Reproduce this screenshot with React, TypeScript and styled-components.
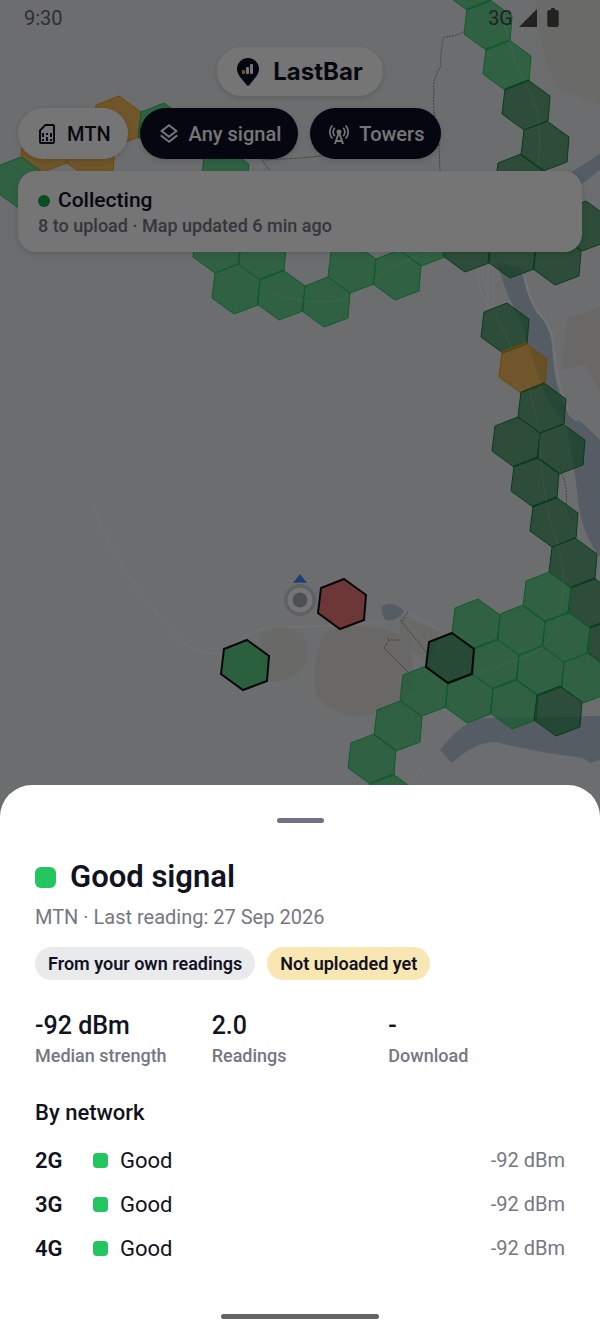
import React from "react";
import styled, { createGlobalStyle } from "styled-components";
import { MdCellTower, MdOutlineLayers, MdOutlineSimCard } from "react-icons/md";

const color = {
  ink: "#111322",
  navy: "#0a0f24",
  muted: "#757783",
  green: "#22c55e",
  darkGreen: "#15803d",
  amber: "#f59e0b",
  red: "#ef4444",
  land: "#ebeef2",
  water: "#bcc9da",
  sand: "#e4e2de",
};

const GlobalStyle = createGlobalStyle`
  *, *::before, *::after { box-sizing: border-box; }
  body {
    margin: 0;
    background: #ffffff;
    color: ${color.ink};
    font-family: Roboto, "Noto Sans", sans-serif;
  }
  h1, h2, p, dl, dd, ul { margin: 0; padding: 0; }
`;

const Screen = styled.div`
  position: relative;
  display: flex;
  flex-direction: column;
  min-height: 100vh;
  overflow: hidden;
  background: ${color.land};
`;

const MapCanvas = styled.svg`
  position: absolute;
  inset: 0;
  width: 100%;
  height: 100%;
`;

const Overlay = styled.header`
  position: relative;
  display: flex;
  flex-direction: column;
  padding: 0 18px;
`;

const StatusBar = styled.div`
  display: flex;
  align-items: center;
  justify-content: space-between;
  height: 35px;
  padding: 0 23px 0 6px;
  font-size: 20px;
  color: #66686c;
`;

const StatusIcons = styled.div`
  display: flex;
  align-items: center;
  gap: 6px;
  color: #4a4a4a;
`;

const SignalIcon = styled.svg`
  width: 18px;
  height: 18px;
  fill: currentColor;
`;

const BatteryIcon = styled.svg`
  width: 12px;
  height: 19px;
  margin-left: 4px;
  fill: currentColor;
`;

const Brand = styled.div`
  display: flex;
  align-items: center;
  align-self: center;
  gap: 14px;
  height: 49px;
  margin-top: 12px;
  padding: 0 20px;
  border-radius: 25px;
  background: #ffffff;
  box-shadow: 0 2px 6px rgba(0, 0, 0, 0.15);
  font: 700 24px/32px Inter, sans-serif;
`;

const BrandMark = styled.svg`
  width: 22px;
  height: 28px;
`;

const Chips = styled.div`
  display: flex;
  gap: 12px;
  margin-top: 12px;
`;

const Chip = styled.button<{ $dark?: boolean }>`
  display: flex;
  align-items: center;
  gap: 8px;
  height: 51px;
  padding: 0 17px;
  border: 0;
  border-radius: 26px;
  background: ${(p) => (p.$dark ? color.navy : "#ffffff")};
  color: ${(p) => (p.$dark ? "#ffffff" : color.ink)};
  box-shadow: 0 2px 6px rgba(0, 0, 0, 0.15);
  font: 500 20px/24px Roboto, sans-serif;
  svg { width: 24px; height: 24px; }
`;

const StatusCard = styled.section`
  margin-top: 12px;
  padding: 17px 20px 14px;
  border-radius: 18px;
  background: #ffffff;
  box-shadow: 0 2px 6px rgba(0, 0, 0, 0.15);
`;

const StatusTitle = styled.p`
  display: flex;
  align-items: center;
  gap: 8px;
  font-size: 21px;
  line-height: 25px;
  font-weight: 500;
`;

const Dot = styled.span`
  width: 12px;
  height: 12px;
  border-radius: 50%;
  background: #16a34a;
`;

const StatusNote = styled.p`
  font-size: 18px;
  line-height: 25px;
  font-weight: 500;
  color: ${color.muted};
`;

const Scrim = styled.div`
  position: absolute;
  inset: 0;
  background: rgba(0, 0, 0, 0.54);
`;

const Sheet = styled.main`
  position: relative;
  margin-top: auto;
  padding: 33px 35px 15px;
  border-radius: 32px 32px 0 0;
  background: #ffffff;
`;

const Handle = styled.div`
  width: 47px;
  height: 5px;
  margin: 0 auto;
  border-radius: 3px;
  background: #6f7185;
`;

const TitleRow = styled.div`
  display: flex;
  align-items: center;
  gap: 14px;
  margin-top: 34px;
`;

const Title = styled.h1`
  font-size: 31px;
  line-height: 40px;
  font-weight: 600;
`;

const Swatch = styled.span<{ $size: number }>`
  width: ${(p) => p.$size}px;
  height: ${(p) => p.$size}px;
  border-radius: ${(p) => (p.$size > 16 ? 6 : 4)}px;
  background: ${color.green};
`;

const Subtitle = styled.p`
  margin-top: 8px;
  font-size: 20px;
  line-height: 24px;
  color: ${color.muted};
`;

const Tags = styled.div`
  display: flex;
  gap: 12px;
  margin-top: 18px;
`;

const Tag = styled.span<{ $warn?: boolean }>`
  padding: 4px 13px;
  border-radius: 17px;
  background: ${(p) => (p.$warn ? "#f9e7b3" : "#e9eaec")};
  font-size: 18px;
  line-height: 25px;
  font-weight: 600;
`;

const Stats = styled.dl`
  display: grid;
  grid-template-columns: repeat(3, 1fr);
  margin-top: 30px;
`;

const Stat = styled.div`
  display: flex;
  flex-direction: column-reverse;
`;

const StatValue = styled.dd`
  font-size: 25px;
  line-height: 32px;
  font-weight: 500;
`;

const StatLabel = styled.dt`
  font-size: 18px;
  line-height: 28px;
  font-weight: 500;
  color: ${color.muted};
`;

const SectionTitle = styled.h2`
  margin-top: 28px;
  font-size: 22px;
  line-height: 30px;
  font-weight: 500;
`;

const NetworkTable = styled.table`
  width: 100%;
  margin-top: 10px;
  border-collapse: collapse;
  font-size: 22px;
`;

const NetworkRow = styled.tr`
  height: 44px;
`;

const NetworkName = styled.th`
  width: 58px;
  padding: 0;
  text-align: left;
  font-weight: 600;
`;

const QualityCell = styled.td`
  padding: 0;
`;

const Quality = styled.span`
  display: flex;
  align-items: center;
  gap: 12px;
`;

const Strength = styled.td`
  padding: 0;
  text-align: right;
  font-size: 20px;
  color: ${color.muted};
`;

const HomeIndicator = styled.div`
  width: 158px;
  height: 5px;
  margin: 44px auto 0;
  border-radius: 3px;
  background: #646464;
`;

type Tone = "green" | "darkGreen" | "amber" | "red";
type Cell = [x: number, y: number, tone: Tone];

const cells: Cell[] = [
  [469, -15, "green"], [488, 25, "green"], [507, 65, "green"],
  [526, 105, "darkGreen"], [545, 146, "darkGreen"], [519, 179, "darkGreen"],
  [584, 226, "darkGreen"], [467, 247, "darkGreen"], [512, 253, "darkGreen"], [557, 260, "darkGreen"],
  [505, 328, "darkGreen"], [523, 368, "amber"], [542, 408, "darkGreen"],
  [516, 442, "darkGreen"], [561, 449, "darkGreen"], [535, 482, "darkGreen"],
  [554, 522, "darkGreen"], [573, 563, "darkGreen"], [592, 603, "darkGreen"], [611, 643, "darkGreen"],
  [547, 597, "green"], [476, 624, "green"], [521, 630, "green"], [566, 637, "green"],
  [495, 664, "green"], [540, 671, "green"], [585, 678, "green"], [424, 691, "green"],
  [469, 698, "green"], [514, 704, "green"], [558, 711, "darkGreen"],
  [398, 726, "green"], [372, 759, "green"], [391, 799, "green"],
  [217, 248, "green"], [262, 255, "green"], [236, 289, "green"], [281, 295, "green"],
  [326, 302, "green"], [352, 268, "green"], [397, 275, "green"], [423, 241, "green"],
  [225, 173, "green"], [117, 121, "amber"], [162, 128, "green"],
  [45, 147, "amber"], [91, 154, "amber"], [19, 182, "green"],
];

const pending: Cell[] = [
  [245, 665, "green"], [342, 604, "red"], [450, 658, "darkGreen"],
];

const hexPoints = (x: number, y: number) =>
  [[2, -25], [24, -9], [22, 16], [-2, 25], [-24, 9], [-21, -16]]
    .map(([dx, dy]) => `${x + dx},${y + dy}`)
    .join(" ");

function CoverageMap() {
  return (
    <MapCanvas viewBox="0 0 600 1334" preserveAspectRatio="xMidYMin slice" aria-hidden="true">
      <g fill={color.sand}>
        <path d="M535 0H600V105L560 90Q540 60 535 0Z" opacity="0.7" />
        <path d="M568 318L600 307V392L585 365L561 370Z" />
        <path d="M262 632Q285 622 304 634Q312 660 300 672Q285 685 268 680Q255 655 262 632Z" opacity="0.8" />
        <path d="M325 632Q370 618 410 640L415 690Q380 720 345 715Q318 706 315 690Q312 655 325 632Z" />
        <path d="M400 614L440 632L430 665L400 640Z" opacity="0.8" />
      </g>
      <g fill={color.water}>
        <path d="M570 173L600 154V170L582 184Z" />
        <path d="M496 262L521 268Q526 295 536 312Q550 325 552 345Q553 375 560 395Q568 415 580 421L600 440V557Q582 535 578 500Q574 460 566 425L545 395L528 345Q522 320 509 298Z" />
        <path d="M440 750Q465 718 487 718L600 716V760L590 763L583 758L547 753Q520 748 495 742Q475 742 452 763Z" />
        <path d="M382 606Q394 600 404 611Q398 622 386 620Q381 616 382 606Z" />
      </g>
      <g fill="none" stroke="#ffffff" strokeWidth="2" opacity="0.8">
        <path d="M478 264Q476 292 490 308M482 264Q482 290 494 308M488 264V300M493 264V304" strokeWidth="1" />
        <path d="M525 277Q530 305 545 320Q555 335 554 350Q558 390 570 415L577 421" />
        <path d="M92 504Q107 545 135 585Q165 625 185 644Q205 655 225 654" strokeWidth="1" />
        <path d="M225 650Q250 630 270 627Q330 627 385 622M404 611L440 630" strokeWidth="1" />
        <path d="M410 785L420 768L425 776" strokeWidth="1" />
      </g>
      <g fill="none" stroke="#8a8e95" strokeWidth="1" strokeDasharray="2 1">
        <path d="M465 31Q455 37 444 37Q440 50 441 66Q432 80 434 90Q432 110 439 145L440 171" />
        <path d="M440 145L300 158L262 160L270 171" />
        <path d="M561 473Q568 485 566 505L573 520" />
        <path d="M400 620L428 654M408 672L384 648L389 640L400 640M389 640L387 637M408 612L402 621" />
      </g>
      {cells.map(([x, y, tone]) => (
        <polygon
          key={`${x}-${y}`}
          points={hexPoints(x, y)}
          fill={color[tone]}
          fillOpacity="0.64"
          stroke={color[tone]}
          strokeWidth="1"
        />
      ))}
      <g fill="none" stroke="#ffffff" strokeWidth="1" opacity="0.16">
        <path d="M503 20Q512 50 515 62Q530 90 537 110Q542 140 538 165" />
        <path d="M494 310Q510 345 525 375Q535 405 540 440Q540 475 550 520Q565 560 563 590Q560 640 530 655Q490 670 475 675" />
        <path d="M270 293Q295 302 325 302Q360 300 385 270Q420 252 450 250" />
      </g>
      {pending.map(([x, y, tone]) => (
        <polygon
          key={`${x}-${y}`}
          points={hexPoints(x, y)}
          fill={color[tone]}
          fillOpacity="0.7"
          stroke="#111111"
          strokeWidth="2"
        />
      ))}
      <circle cx="300" cy="600" r="16" fill="#000000" opacity="0.12" />
      <path d="M300 574L307 583Q300 582 293 583Z" fill="#4285f4" />
      <circle cx="300" cy="600" r="10" fill="#a9b0b6" stroke="#ffffff" strokeWidth="5" />
    </MapCanvas>
  );
}

const networks = [
  { name: "2G", quality: "Good", strength: "-92 dBm" },
  { name: "3G", quality: "Good", strength: "-92 dBm" },
  { name: "4G", quality: "Good", strength: "-92 dBm" },
];

const stats = [
  { label: "Median strength", value: "-92 dBm" },
  { label: "Readings", value: "2.0" },
  { label: "Download", value: "-" },
];

export default function App() {
  return (
    <Screen>
      <GlobalStyle />
      <CoverageMap />
      <Overlay>
        <StatusBar>
          <span>9:30</span>
          <StatusIcons>
            <span>3G</span>
            <SignalIcon viewBox="0 0 18 18" aria-hidden="true"><path d="M0 18L18 0V18Z" /></SignalIcon>
            <BatteryIcon viewBox="0 0 12 20" aria-hidden="true">
              <path d="M4 0H8V2H10Q12 2 12 4V18Q12 20 10 20H2Q0 20 0 18V4Q0 2 2 2H4Z" />
            </BatteryIcon>
          </StatusIcons>
        </StatusBar>
        <Brand>
          <BrandMark viewBox="0 0 22 28" aria-hidden="true">
            <path d="M11 0A11 11 0 0 1 22 11C22 17 16 22 12.500 27Q11 28.500 9.500 27C6 22 0 17 0 11A11 11 0 0 1 11 0Z" fill={color.navy} />
            <rect x="5" y="12" width="3" height="4" rx="1" fill="#f5c518" />
            <rect x="9" y="9" width="3" height="7" rx="1" fill="#ffffff" />
            <rect x="13" y="6" width="3" height="10" rx="1" fill="#ffffff" />
          </BrandMark>
          <span>LastBar</span>
        </Brand>
        <Chips>
          <Chip type="button"><MdOutlineSimCard />MTN</Chip>
          <Chip type="button" $dark><MdOutlineLayers />Any signal</Chip>
          <Chip type="button" $dark><MdCellTower />Towers</Chip>
        </Chips>
        <StatusCard>
          <StatusTitle><Dot />Collecting</StatusTitle>
          <StatusNote>8 to upload · Map updated 6 min ago</StatusNote>
        </StatusCard>
      </Overlay>
      <Scrim />
      <Sheet>
        <Handle />
        <TitleRow>
          <Swatch $size={21} />
          <Title>Good signal</Title>
        </TitleRow>
        <Subtitle>MTN · Last reading: 27 Sep 2026</Subtitle>
        <Tags>
          <Tag>From your own readings</Tag>
          <Tag $warn>Not uploaded yet</Tag>
        </Tags>
        <Stats>
          {stats.map((s) => (
            <Stat key={s.label}>
              <StatLabel>{s.label}</StatLabel>
              <StatValue>{s.value}</StatValue>
            </Stat>
          ))}
        </Stats>
        <SectionTitle>By network</SectionTitle>
        <NetworkTable>
          <tbody>
            {networks.map((n) => (
              <NetworkRow key={n.name}>
                <NetworkName scope="row">{n.name}</NetworkName>
                <QualityCell><Quality><Swatch $size={15} />{n.quality}</Quality></QualityCell>
                <Strength>{n.strength}</Strength>
              </NetworkRow>
            ))}
          </tbody>
        </NetworkTable>
        <HomeIndicator />
      </Sheet>
    </Screen>
  );
}
